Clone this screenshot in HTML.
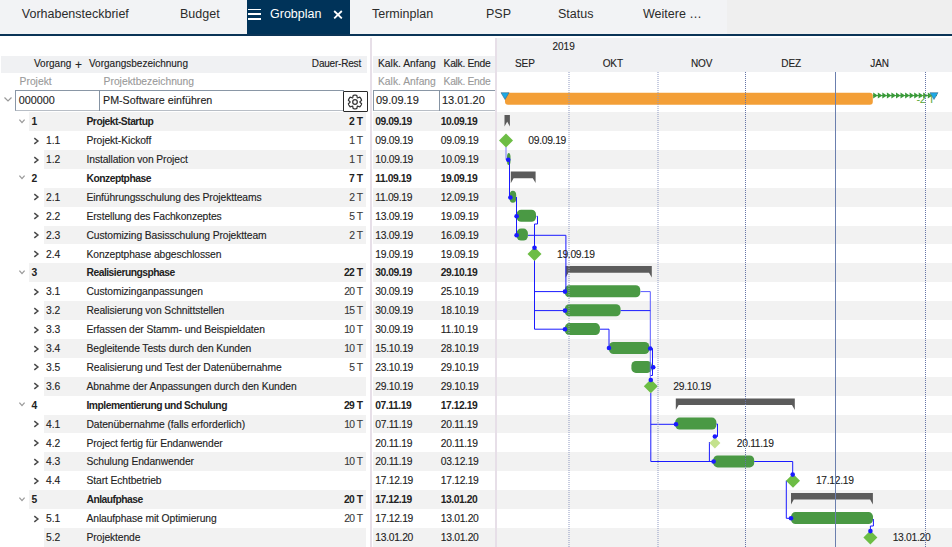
<!DOCTYPE html>
<html><head><meta charset="utf-8">
<style>
*{box-sizing:border-box;margin:0;padding:0}
html,body{width:952px;height:547px;overflow:hidden;background:#fff;font-family:"Liberation Sans",sans-serif;color:#222}
.a{position:absolute}
.tab{position:absolute;top:0;height:34px;line-height:29px;font-size:12.5px;color:#2b2b2b;white-space:nowrap}
.t{position:absolute;font-size:10.3px;white-space:nowrap;line-height:12px;-webkit-text-stroke:0.12px currentColor}
.b{font-weight:700;letter-spacing:-0.5px;-webkit-text-stroke:0}
.g{color:#9a9a9a}
.rbg{position:absolute;background:#f2f2f2}
</style></head><body>

<div class="a" style="left:0;top:0;width:727px;height:34px;background:#f2f3f5"></div>
<div class="a" style="left:727px;top:0;width:225px;height:34px;background:#efefef"></div>
<div class="a" style="left:0;top:34px;width:952px;height:2px;background:#0a3457"></div>
<div class="a" style="left:247px;top:0;width:103px;height:34px;background:#003359"></div>
<div class="tab" style="left:21.8px">Vorhabensteckbrief</div>
<div class="tab" style="left:180px">Budget</div>
<div class="tab" style="left:372px">Terminplan</div>
<div class="tab" style="left:486px">PSP</div>
<div class="tab" style="left:558px">Status</div>
<div class="tab" style="left:643px">Weitere …</div>
<div class="tab" style="left:270px;color:#fff">Grobplan</div>
<div class="a" style="left:248px;top:8.7px;width:13.2px;height:1.7px;background:#fff"></div>
<div class="a" style="left:248px;top:13.3px;width:13.2px;height:1.7px;background:#fff"></div>
<div class="a" style="left:248px;top:18.3px;width:13.2px;height:1.7px;background:#fff"></div>
<svg class="a" style="left:333px;top:10px" width="10" height="9" viewBox="0 0 10 9"><path d="M1.2 1L8.8 8.4M8.8 1L1.2 8.4" stroke="#fff" stroke-width="1.8"/></svg>
<div class="a" style="left:370px;top:38px;width:1.5px;height:509px;background:#e7dfe8"></div>
<div class="a" style="left:495px;top:38px;width:1.5px;height:509px;background:#e7dfe8"></div>
<div class="a" style="left:1px;top:56px;width:366px;height:17px;background:#f0f1f3"></div>
<div class="a" style="left:373px;top:56px;width:122px;height:17px;background:#f0f1f3"></div>
<div class="a" style="left:497px;top:38px;width:455px;height:34px;background:#f0f1f3"></div>
<div class="t" style="left:34px;top:57.7px;font-size:10px">Vorgang</div>
<div class="t" style="left:75px;top:59px;font-size:12px">+</div>
<div class="t" style="left:89px;top:57.7px;font-size:10px">Vorgangsbezeichnung</div>
<div class="t" style="left:300px;top:57.7px;width:61px;text-align:right;font-size:10px;letter-spacing:-0.2px">Dauer-Rest</div>
<div class="t" style="left:378px;top:57.7px">Kalk. Anfang</div>
<div class="t" style="left:443.6px;top:57.7px;letter-spacing:-0.3px">Kalk. Ende</div>
<div class="t g" style="left:19.6px;top:75.6px">Projekt</div>
<div class="t g" style="left:103.6px;top:75.6px">Projektbezeichnung</div>
<div class="t g" style="left:378px;top:75.6px">Kalk. Anfang</div>
<div class="t g" style="left:443.6px;top:75.6px;letter-spacing:-0.3px">Kalk. Ende</div>
<div class="t" style="left:552.5px;top:41px;font-size:10px">2019</div>
<div class="t" style="left:515px;top:57.8px;font-size:10px;letter-spacing:-0.1px">SEP</div>
<div class="t" style="left:602.7px;top:57.8px;font-size:10px;letter-spacing:-0.1px">OKT</div>
<div class="t" style="left:691px;top:57.8px;font-size:10px;letter-spacing:-0.1px">NOV</div>
<div class="t" style="left:781.3px;top:57.8px;font-size:10px;letter-spacing:-0.1px">DEZ</div>
<div class="t" style="left:870.3px;top:57.8px;font-size:10px;letter-spacing:-0.1px">JAN</div>
<div class="a" style="left:15px;top:90px;width:329px;height:21px;border:1px solid #8a97a6;border-bottom:1.5px solid #b8bec6;background:#fff"></div>
<div class="a" style="left:99px;top:90px;width:1px;height:21px;background:#8593a3"></div>
<div class="a" style="left:343px;top:91px;width:25px;height:21px;border:1.3px solid #2a2a2a;border-radius:1px;background:#fff"></div>
<svg class="a" style="left:343px;top:89.5px" width="24" height="24" viewBox="0 0 24 24"><path fill="none" stroke="#333" stroke-width="1.25" stroke-linejoin="round" d="M16.90 12.00 L17.00 12.26 L17.30 12.56 L17.72 12.91 L18.20 13.32 L18.57 13.76 L18.47 14.10 L18.35 14.44 L18.21 14.77 L18.06 15.09 L17.89 15.40 L17.70 15.70 L17.50 16.00 L17.28 16.28 L17.05 16.55 L16.81 16.81 L16.24 16.71 L15.65 16.50 L15.13 16.31 L14.73 16.20 L14.45 16.24 L14.27 16.46 L14.17 16.87 L14.08 17.41 L13.96 18.03 L13.76 18.57 L13.41 18.65 L13.06 18.72 L12.71 18.76 L12.36 18.79 L12.00 18.80 L11.64 18.79 L11.29 18.76 L10.94 18.72 L10.59 18.65 L10.24 18.57 L10.04 18.03 L9.92 17.41 L9.83 16.87 L9.73 16.46 L9.55 16.24 L9.27 16.20 L8.87 16.31 L8.35 16.50 L7.76 16.71 L7.19 16.81 L6.95 16.55 L6.72 16.28 L6.50 16.00 L6.30 15.70 L6.11 15.40 L5.94 15.09 L5.79 14.77 L5.65 14.44 L5.53 14.10 L5.43 13.76 L5.80 13.32 L6.28 12.91 L6.70 12.56 L7.00 12.26 L7.10 12.00 L7.00 11.74 L6.70 11.44 L6.28 11.09 L5.80 10.68 L5.43 10.24 L5.53 9.90 L5.65 9.56 L5.79 9.23 L5.94 8.91 L6.11 8.60 L6.30 8.30 L6.50 8.00 L6.72 7.72 L6.95 7.45 L7.19 7.19 L7.76 7.29 L8.35 7.50 L8.87 7.69 L9.27 7.80 L9.55 7.76 L9.73 7.54 L9.83 7.13 L9.92 6.59 L10.04 5.97 L10.24 5.43 L10.59 5.35 L10.94 5.28 L11.29 5.24 L11.64 5.21 L12.00 5.20 L12.36 5.21 L12.71 5.24 L13.06 5.28 L13.41 5.35 L13.76 5.43 L13.96 5.97 L14.08 6.59 L14.17 7.13 L14.27 7.54 L14.45 7.76 L14.73 7.80 L15.13 7.69 L15.65 7.50 L16.24 7.29 L16.81 7.19 L17.05 7.45 L17.28 7.72 L17.50 8.00 L17.70 8.30 L17.89 8.60 L18.06 8.91 L18.21 9.23 L18.35 9.56 L18.47 9.90 L18.57 10.24 L18.20 10.68 L17.72 11.09 L17.30 11.44 L17.00 11.74 L16.90 12.00Z"/><circle cx="12" cy="12" r="2.3" fill="none" stroke="#333" stroke-width="1.25"/></svg>
<div class="a" style="left:373px;top:90px;width:122px;height:21px;border:1px solid #8a97a6;border-right:none;border-bottom:1.5px solid #b8bec6;background:#fff"></div>
<div class="a" style="left:439px;top:90px;width:1px;height:21px;background:#8593a3"></div>
<div class="t" style="left:18.7px;top:94px;font-size:10.8px">000000</div>
<div class="t" style="left:103px;top:94px;font-size:10.7px">PM-Software einführen</div>
<div class="t" style="left:376px;top:94px;font-size:11px">09.09.19</div>
<div class="t" style="left:442px;top:94px;font-size:11px">13.01.20</div>
<svg class="a" style="left:4px;top:96px" width="8" height="7" viewBox="0 0 8 7"><path d="M0.5 1.5L4 5L7.5 1.5" fill="none" stroke="#999" stroke-width="1.2"/></svg>
<div class="rbg" style="left:29.2px;top:112.20px;width:336.8px;height:18.9px"></div>
<div class="rbg" style="left:373px;top:112.20px;width:122px;height:18.9px"></div>
<div class="rbg" style="left:497px;top:112.20px;width:455px;height:18.9px"></div>
<svg class="a" style="left:18px;top:117.70px" width="8" height="7" viewBox="0 0 8 7"><path d="M1.4 1.6L4 4.6L6.6 1.6" fill="none" stroke="#9a9a9a" stroke-width="1.3"/></svg>
<div class="t b" style="left:31.5px;top:116.20px">1</div>
<div class="t b" style="left:86.5px;top:116.20px">Projekt-Startup</div>
<div class="t b" style="left:313px;top:116.20px;width:50px;text-align:right">2 <span style='letter-spacing:0'>T</span></div>
<div class="t b" style="left:375.3px;top:116.20px;letter-spacing:-0.45px">09.09.19</div>
<div class="t b" style="left:440.8px;top:116.20px;letter-spacing:-0.45px">10.09.19</div>
<svg class="a" style="left:32.5px;top:136.60px" width="7" height="8" viewBox="0 0 7 8"><path d="M1.3 1.1L4.9 4L1.3 6.9" fill="none" stroke="#4a4a4a" stroke-width="1.5"/></svg>
<div class="t" style="left:46px;top:135.10px">1.1</div>
<div class="t" style="left:86.5px;top:135.10px;letter-spacing:-0.1px">Projekt-Kickoff</div>
<div class="t" style="left:313px;top:135.10px;width:50px;text-align:right;color:#3a3a3a;letter-spacing:-0.6px">1 <span style='letter-spacing:0'>T</span></div>
<div class="t" style="left:375.3px;top:135.10px;letter-spacing:-0.3px">09.09.19</div>
<div class="t" style="left:440.8px;top:135.10px;letter-spacing:-0.3px">09.09.19</div>
<div class="rbg" style="left:44px;top:150.00px;width:322px;height:18.9px"></div>
<div class="rbg" style="left:373px;top:150.00px;width:122px;height:18.9px"></div>
<div class="rbg" style="left:497px;top:150.00px;width:455px;height:18.9px"></div>
<svg class="a" style="left:32.5px;top:155.50px" width="7" height="8" viewBox="0 0 7 8"><path d="M1.3 1.1L4.9 4L1.3 6.9" fill="none" stroke="#4a4a4a" stroke-width="1.5"/></svg>
<div class="t" style="left:46px;top:154.00px">1.2</div>
<div class="t" style="left:86.5px;top:154.00px;letter-spacing:-0.1px">Installation von Project</div>
<div class="t" style="left:313px;top:154.00px;width:50px;text-align:right;color:#3a3a3a;letter-spacing:-0.6px">1 <span style='letter-spacing:0'>T</span></div>
<div class="t" style="left:375.3px;top:154.00px;letter-spacing:-0.3px">10.09.19</div>
<div class="t" style="left:440.8px;top:154.00px;letter-spacing:-0.3px">10.09.19</div>
<svg class="a" style="left:18px;top:174.40px" width="8" height="7" viewBox="0 0 8 7"><path d="M1.4 1.6L4 4.6L6.6 1.6" fill="none" stroke="#9a9a9a" stroke-width="1.3"/></svg>
<div class="t b" style="left:31.5px;top:172.90px">2</div>
<div class="t b" style="left:86.5px;top:172.90px">Konzeptphase</div>
<div class="t b" style="left:313px;top:172.90px;width:50px;text-align:right">7 <span style='letter-spacing:0'>T</span></div>
<div class="t b" style="left:375.3px;top:172.90px;letter-spacing:-0.45px">11.09.19</div>
<div class="t b" style="left:440.8px;top:172.90px;letter-spacing:-0.45px">19.09.19</div>
<div class="rbg" style="left:44px;top:187.80px;width:322px;height:18.9px"></div>
<div class="rbg" style="left:373px;top:187.80px;width:122px;height:18.9px"></div>
<div class="rbg" style="left:497px;top:187.80px;width:455px;height:18.9px"></div>
<svg class="a" style="left:32.5px;top:193.30px" width="7" height="8" viewBox="0 0 7 8"><path d="M1.3 1.1L4.9 4L1.3 6.9" fill="none" stroke="#4a4a4a" stroke-width="1.5"/></svg>
<div class="t" style="left:46px;top:191.80px">2.1</div>
<div class="t" style="left:86.5px;top:191.80px;letter-spacing:-0.1px">Einführungsschulung des Projektteams</div>
<div class="t" style="left:313px;top:191.80px;width:50px;text-align:right;color:#3a3a3a;letter-spacing:-0.6px">2 <span style='letter-spacing:0'>T</span></div>
<div class="t" style="left:375.3px;top:191.80px;letter-spacing:-0.3px">11.09.19</div>
<div class="t" style="left:440.8px;top:191.80px;letter-spacing:-0.3px">12.09.19</div>
<svg class="a" style="left:32.5px;top:212.20px" width="7" height="8" viewBox="0 0 7 8"><path d="M1.3 1.1L4.9 4L1.3 6.9" fill="none" stroke="#4a4a4a" stroke-width="1.5"/></svg>
<div class="t" style="left:46px;top:210.70px">2.2</div>
<div class="t" style="left:86.5px;top:210.70px;letter-spacing:-0.1px">Erstellung des Fachkonzeptes</div>
<div class="t" style="left:313px;top:210.70px;width:50px;text-align:right;color:#3a3a3a;letter-spacing:-0.6px">5 <span style='letter-spacing:0'>T</span></div>
<div class="t" style="left:375.3px;top:210.70px;letter-spacing:-0.3px">13.09.19</div>
<div class="t" style="left:440.8px;top:210.70px;letter-spacing:-0.3px">19.09.19</div>
<div class="rbg" style="left:44px;top:225.60px;width:322px;height:18.9px"></div>
<div class="rbg" style="left:373px;top:225.60px;width:122px;height:18.9px"></div>
<div class="rbg" style="left:497px;top:225.60px;width:455px;height:18.9px"></div>
<svg class="a" style="left:32.5px;top:231.10px" width="7" height="8" viewBox="0 0 7 8"><path d="M1.3 1.1L4.9 4L1.3 6.9" fill="none" stroke="#4a4a4a" stroke-width="1.5"/></svg>
<div class="t" style="left:46px;top:229.60px">2.3</div>
<div class="t" style="left:86.5px;top:229.60px;letter-spacing:-0.1px">Customizing Basisschulung Projektteam</div>
<div class="t" style="left:313px;top:229.60px;width:50px;text-align:right;color:#3a3a3a;letter-spacing:-0.6px">2 <span style='letter-spacing:0'>T</span></div>
<div class="t" style="left:375.3px;top:229.60px;letter-spacing:-0.3px">13.09.19</div>
<div class="t" style="left:440.8px;top:229.60px;letter-spacing:-0.3px">16.09.19</div>
<svg class="a" style="left:32.5px;top:250.00px" width="7" height="8" viewBox="0 0 7 8"><path d="M1.3 1.1L4.9 4L1.3 6.9" fill="none" stroke="#4a4a4a" stroke-width="1.5"/></svg>
<div class="t" style="left:46px;top:248.50px">2.4</div>
<div class="t" style="left:86.5px;top:248.50px;letter-spacing:-0.1px">Konzeptphase abgeschlossen</div>
<div class="t" style="left:375.3px;top:248.50px;letter-spacing:-0.3px">19.09.19</div>
<div class="t" style="left:440.8px;top:248.50px;letter-spacing:-0.3px">19.09.19</div>
<div class="rbg" style="left:29.2px;top:263.40px;width:336.8px;height:18.9px"></div>
<div class="rbg" style="left:373px;top:263.40px;width:122px;height:18.9px"></div>
<div class="rbg" style="left:497px;top:263.40px;width:455px;height:18.9px"></div>
<svg class="a" style="left:18px;top:268.90px" width="8" height="7" viewBox="0 0 8 7"><path d="M1.4 1.6L4 4.6L6.6 1.6" fill="none" stroke="#9a9a9a" stroke-width="1.3"/></svg>
<div class="t b" style="left:31.5px;top:267.40px">3</div>
<div class="t b" style="left:86.5px;top:267.40px">Realisierungsphase</div>
<div class="t b" style="left:313px;top:267.40px;width:50px;text-align:right">22 <span style='letter-spacing:0'>T</span></div>
<div class="t b" style="left:375.3px;top:267.40px;letter-spacing:-0.45px">30.09.19</div>
<div class="t b" style="left:440.8px;top:267.40px;letter-spacing:-0.45px">29.10.19</div>
<svg class="a" style="left:32.5px;top:287.80px" width="7" height="8" viewBox="0 0 7 8"><path d="M1.3 1.1L4.9 4L1.3 6.9" fill="none" stroke="#4a4a4a" stroke-width="1.5"/></svg>
<div class="t" style="left:46px;top:286.30px">3.1</div>
<div class="t" style="left:86.5px;top:286.30px;letter-spacing:-0.1px">Customizinganpassungen</div>
<div class="t" style="left:313px;top:286.30px;width:50px;text-align:right;color:#3a3a3a;letter-spacing:-0.6px">20 <span style='letter-spacing:0'>T</span></div>
<div class="t" style="left:375.3px;top:286.30px;letter-spacing:-0.3px">30.09.19</div>
<div class="t" style="left:440.8px;top:286.30px;letter-spacing:-0.3px">25.10.19</div>
<div class="rbg" style="left:44px;top:301.20px;width:322px;height:18.9px"></div>
<div class="rbg" style="left:373px;top:301.20px;width:122px;height:18.9px"></div>
<div class="rbg" style="left:497px;top:301.20px;width:455px;height:18.9px"></div>
<svg class="a" style="left:32.5px;top:306.70px" width="7" height="8" viewBox="0 0 7 8"><path d="M1.3 1.1L4.9 4L1.3 6.9" fill="none" stroke="#4a4a4a" stroke-width="1.5"/></svg>
<div class="t" style="left:46px;top:305.20px">3.2</div>
<div class="t" style="left:86.5px;top:305.20px;letter-spacing:-0.1px">Realisierung von Schnittstellen</div>
<div class="t" style="left:313px;top:305.20px;width:50px;text-align:right;color:#3a3a3a;letter-spacing:-0.6px">15 <span style='letter-spacing:0'>T</span></div>
<div class="t" style="left:375.3px;top:305.20px;letter-spacing:-0.3px">30.09.19</div>
<div class="t" style="left:440.8px;top:305.20px;letter-spacing:-0.3px">18.10.19</div>
<svg class="a" style="left:32.5px;top:325.60px" width="7" height="8" viewBox="0 0 7 8"><path d="M1.3 1.1L4.9 4L1.3 6.9" fill="none" stroke="#4a4a4a" stroke-width="1.5"/></svg>
<div class="t" style="left:46px;top:324.10px">3.3</div>
<div class="t" style="left:86.5px;top:324.10px;letter-spacing:-0.1px">Erfassen der Stamm- und Beispieldaten</div>
<div class="t" style="left:313px;top:324.10px;width:50px;text-align:right;color:#3a3a3a;letter-spacing:-0.6px">10 <span style='letter-spacing:0'>T</span></div>
<div class="t" style="left:375.3px;top:324.10px;letter-spacing:-0.3px">30.09.19</div>
<div class="t" style="left:440.8px;top:324.10px;letter-spacing:-0.3px">11.10.19</div>
<div class="rbg" style="left:44px;top:339.00px;width:322px;height:18.9px"></div>
<div class="rbg" style="left:373px;top:339.00px;width:122px;height:18.9px"></div>
<div class="rbg" style="left:497px;top:339.00px;width:455px;height:18.9px"></div>
<svg class="a" style="left:32.5px;top:344.50px" width="7" height="8" viewBox="0 0 7 8"><path d="M1.3 1.1L4.9 4L1.3 6.9" fill="none" stroke="#4a4a4a" stroke-width="1.5"/></svg>
<div class="t" style="left:46px;top:343.00px">3.4</div>
<div class="t" style="left:86.5px;top:343.00px;letter-spacing:-0.1px">Begleitende Tests durch den Kunden</div>
<div class="t" style="left:313px;top:343.00px;width:50px;text-align:right;color:#3a3a3a;letter-spacing:-0.6px">10 <span style='letter-spacing:0'>T</span></div>
<div class="t" style="left:375.3px;top:343.00px;letter-spacing:-0.3px">15.10.19</div>
<div class="t" style="left:440.8px;top:343.00px;letter-spacing:-0.3px">28.10.19</div>
<svg class="a" style="left:32.5px;top:363.40px" width="7" height="8" viewBox="0 0 7 8"><path d="M1.3 1.1L4.9 4L1.3 6.9" fill="none" stroke="#4a4a4a" stroke-width="1.5"/></svg>
<div class="t" style="left:46px;top:361.90px">3.5</div>
<div class="t" style="left:86.5px;top:361.90px;letter-spacing:-0.1px">Realisierung und Test der Datenübernahme</div>
<div class="t" style="left:313px;top:361.90px;width:50px;text-align:right;color:#3a3a3a;letter-spacing:-0.6px">5 <span style='letter-spacing:0'>T</span></div>
<div class="t" style="left:375.3px;top:361.90px;letter-spacing:-0.3px">23.10.19</div>
<div class="t" style="left:440.8px;top:361.90px;letter-spacing:-0.3px">29.10.19</div>
<div class="rbg" style="left:44px;top:376.80px;width:322px;height:18.9px"></div>
<div class="rbg" style="left:373px;top:376.80px;width:122px;height:18.9px"></div>
<div class="rbg" style="left:497px;top:376.80px;width:455px;height:18.9px"></div>
<svg class="a" style="left:32.5px;top:382.30px" width="7" height="8" viewBox="0 0 7 8"><path d="M1.3 1.1L4.9 4L1.3 6.9" fill="none" stroke="#4a4a4a" stroke-width="1.5"/></svg>
<div class="t" style="left:46px;top:380.80px">3.6</div>
<div class="t" style="left:86.5px;top:380.80px;letter-spacing:-0.1px">Abnahme der Anpassungen durch den Kunden</div>
<div class="t" style="left:375.3px;top:380.80px;letter-spacing:-0.3px">29.10.19</div>
<div class="t" style="left:440.8px;top:380.80px;letter-spacing:-0.3px">29.10.19</div>
<svg class="a" style="left:18px;top:401.20px" width="8" height="7" viewBox="0 0 8 7"><path d="M1.4 1.6L4 4.6L6.6 1.6" fill="none" stroke="#9a9a9a" stroke-width="1.3"/></svg>
<div class="t b" style="left:31.5px;top:399.70px">4</div>
<div class="t b" style="left:86.5px;top:399.70px">Implementierung und Schulung</div>
<div class="t b" style="left:313px;top:399.70px;width:50px;text-align:right">29 <span style='letter-spacing:0'>T</span></div>
<div class="t b" style="left:375.3px;top:399.70px;letter-spacing:-0.45px">07.11.19</div>
<div class="t b" style="left:440.8px;top:399.70px;letter-spacing:-0.45px">17.12.19</div>
<div class="rbg" style="left:44px;top:414.60px;width:322px;height:18.9px"></div>
<div class="rbg" style="left:373px;top:414.60px;width:122px;height:18.9px"></div>
<div class="rbg" style="left:497px;top:414.60px;width:455px;height:18.9px"></div>
<svg class="a" style="left:32.5px;top:420.10px" width="7" height="8" viewBox="0 0 7 8"><path d="M1.3 1.1L4.9 4L1.3 6.9" fill="none" stroke="#4a4a4a" stroke-width="1.5"/></svg>
<div class="t" style="left:46px;top:418.60px">4.1</div>
<div class="t" style="left:86.5px;top:418.60px;letter-spacing:-0.1px">Datenübernahme (falls erforderlich)</div>
<div class="t" style="left:313px;top:418.60px;width:50px;text-align:right;color:#3a3a3a;letter-spacing:-0.6px">10 <span style='letter-spacing:0'>T</span></div>
<div class="t" style="left:375.3px;top:418.60px;letter-spacing:-0.3px">07.11.19</div>
<div class="t" style="left:440.8px;top:418.60px;letter-spacing:-0.3px">20.11.19</div>
<svg class="a" style="left:32.5px;top:439.00px" width="7" height="8" viewBox="0 0 7 8"><path d="M1.3 1.1L4.9 4L1.3 6.9" fill="none" stroke="#4a4a4a" stroke-width="1.5"/></svg>
<div class="t" style="left:46px;top:437.50px">4.2</div>
<div class="t" style="left:86.5px;top:437.50px;letter-spacing:-0.1px">Project fertig für Endanwender</div>
<div class="t" style="left:375.3px;top:437.50px;letter-spacing:-0.3px">20.11.19</div>
<div class="t" style="left:440.8px;top:437.50px;letter-spacing:-0.3px">20.11.19</div>
<div class="rbg" style="left:44px;top:452.40px;width:322px;height:18.9px"></div>
<div class="rbg" style="left:373px;top:452.40px;width:122px;height:18.9px"></div>
<div class="rbg" style="left:497px;top:452.40px;width:455px;height:18.9px"></div>
<svg class="a" style="left:32.5px;top:457.90px" width="7" height="8" viewBox="0 0 7 8"><path d="M1.3 1.1L4.9 4L1.3 6.9" fill="none" stroke="#4a4a4a" stroke-width="1.5"/></svg>
<div class="t" style="left:46px;top:456.40px">4.3</div>
<div class="t" style="left:86.5px;top:456.40px;letter-spacing:-0.1px">Schulung Endanwender</div>
<div class="t" style="left:313px;top:456.40px;width:50px;text-align:right;color:#3a3a3a;letter-spacing:-0.6px">10 <span style='letter-spacing:0'>T</span></div>
<div class="t" style="left:375.3px;top:456.40px;letter-spacing:-0.3px">20.11.19</div>
<div class="t" style="left:440.8px;top:456.40px;letter-spacing:-0.3px">03.12.19</div>
<svg class="a" style="left:32.5px;top:476.80px" width="7" height="8" viewBox="0 0 7 8"><path d="M1.3 1.1L4.9 4L1.3 6.9" fill="none" stroke="#4a4a4a" stroke-width="1.5"/></svg>
<div class="t" style="left:46px;top:475.30px">4.4</div>
<div class="t" style="left:86.5px;top:475.30px;letter-spacing:-0.1px">Start Echtbetrieb</div>
<div class="t" style="left:375.3px;top:475.30px;letter-spacing:-0.3px">17.12.19</div>
<div class="t" style="left:440.8px;top:475.30px;letter-spacing:-0.3px">17.12.19</div>
<div class="rbg" style="left:29.2px;top:490.20px;width:336.8px;height:18.9px"></div>
<div class="rbg" style="left:373px;top:490.20px;width:122px;height:18.9px"></div>
<div class="rbg" style="left:497px;top:490.20px;width:455px;height:18.9px"></div>
<svg class="a" style="left:18px;top:495.70px" width="8" height="7" viewBox="0 0 8 7"><path d="M1.4 1.6L4 4.6L6.6 1.6" fill="none" stroke="#9a9a9a" stroke-width="1.3"/></svg>
<div class="t b" style="left:31.5px;top:494.20px">5</div>
<div class="t b" style="left:86.5px;top:494.20px">Anlaufphase</div>
<div class="t b" style="left:313px;top:494.20px;width:50px;text-align:right">20 <span style='letter-spacing:0'>T</span></div>
<div class="t b" style="left:375.3px;top:494.20px;letter-spacing:-0.45px">17.12.19</div>
<div class="t b" style="left:440.8px;top:494.20px;letter-spacing:-0.45px">13.01.20</div>
<svg class="a" style="left:32.5px;top:514.60px" width="7" height="8" viewBox="0 0 7 8"><path d="M1.3 1.1L4.9 4L1.3 6.9" fill="none" stroke="#4a4a4a" stroke-width="1.5"/></svg>
<div class="t" style="left:46px;top:513.10px">5.1</div>
<div class="t" style="left:86.5px;top:513.10px;letter-spacing:-0.1px">Anlaufphase mit Optimierung</div>
<div class="t" style="left:313px;top:513.10px;width:50px;text-align:right;color:#3a3a3a;letter-spacing:-0.6px">20 <span style='letter-spacing:0'>T</span></div>
<div class="t" style="left:375.3px;top:513.10px;letter-spacing:-0.3px">17.12.19</div>
<div class="t" style="left:440.8px;top:513.10px;letter-spacing:-0.3px">13.01.20</div>
<div class="rbg" style="left:44px;top:528.00px;width:322px;height:18.9px"></div>
<div class="rbg" style="left:373px;top:528.00px;width:122px;height:18.9px"></div>
<div class="rbg" style="left:497px;top:528.00px;width:455px;height:18.9px"></div>
<div class="t" style="left:46px;top:532.00px">5.2</div>
<div class="t" style="left:86.5px;top:532.00px;letter-spacing:-0.1px">Projektende</div>
<div class="t" style="left:375.3px;top:532.00px;letter-spacing:-0.3px">13.01.20</div>
<div class="t" style="left:440.8px;top:532.00px;letter-spacing:-0.3px">13.01.20</div>
<svg class="a" style="left:0;top:0" width="952" height="547" viewBox="0 0 952 547"><rect x="505" y="92.7" width="367.8" height="12" rx="3" fill="#f39f37"/><path d="M873.2 92.6 L877.8 95.6 L873.2 98.6 Z" fill="#3a9a3a"/><path d="M877.8 92.6 L882.4 95.6 L877.8 98.6 Z" fill="#3a9a3a"/><path d="M882.3 92.6 L886.9 95.6 L882.3 98.6 Z" fill="#3a9a3a"/><path d="M886.9 92.6 L891.5 95.6 L886.9 98.6 Z" fill="#3a9a3a"/><path d="M891.4 92.6 L896.0 95.6 L891.4 98.6 Z" fill="#3a9a3a"/><path d="M896.0 92.6 L900.6 95.6 L896.0 98.6 Z" fill="#3a9a3a"/><path d="M900.5 92.6 L905.1 95.6 L900.5 98.6 Z" fill="#3a9a3a"/><path d="M905.1 92.6 L909.7 95.6 L905.1 98.6 Z" fill="#3a9a3a"/><path d="M909.6 92.6 L914.2 95.6 L909.6 98.6 Z" fill="#3a9a3a"/><path d="M914.2 92.6 L918.8 95.6 L914.2 98.6 Z" fill="#3a9a3a"/><path d="M918.7 92.6 L923.3 95.6 L918.7 98.6 Z" fill="#3a9a3a"/><path d="M923.2 92.6 L927.9 95.6 L923.2 98.6 Z" fill="#3a9a3a"/><path d="M927.8 92.6 L932.4 95.6 L927.8 98.6 Z" fill="#3a9a3a"/><line x1="873" y1="95.6" x2="937" y2="95.6" stroke="#3a9a3a" stroke-width="1"/><text x="916.5" y="102.8" font-size="11" fill="#5aa838" font-family="Liberation Sans" letter-spacing="-0.3">-2 T</text><path d="M501 92.7 L509 92.7 L505 99.5 Z" fill="#1ca9e6" stroke="#3a6a8a" stroke-width="0.6"/><path d="M930 92.7 L938 92.7 L934 99.5 Z" fill="#1ca9e6" stroke="#3a6a8a" stroke-width="0.6"/><path d="M504.5 114.9 H509.9 V126.4 L507.1 121.5 H507.3 L504.5 126.5 Z" fill="#5b5b5b"/><path d="M510.8 171.6 H535.6 V183.1 L532.8 178.2 H513.6 L510.8 183.2 Z" fill="#5b5b5b"/><path d="M565.6 266.1 H651.8 V277.6 L649.0 272.7 H568.4 L565.6 277.7 Z" fill="#5b5b5b"/><path d="M675.8 398.4 H794.8 V409.9 L792.0 405.0 H678.6 L675.8 410.0 Z" fill="#5b5b5b"/><path d="M791.0 492.9 H872.9 V504.4 L870.1 499.5 H793.8 L791.0 504.5 Z" fill="#5b5b5b"/><rect x="507.0" y="153.0" width="3.5" height="12" rx="4.5" fill="#4a9944"/><rect x="509.6" y="190.8" width="6.6" height="12" rx="4.5" fill="#4a9944"/><rect x="516.6" y="209.7" width="19.4" height="12" rx="4.5" fill="#4a9944"/><rect x="516.6" y="228.6" width="11.3" height="12" rx="4.5" fill="#4a9944"/><rect x="564.8" y="285.3" width="75.5" height="12" rx="4.5" fill="#4a9944"/><rect x="564.8" y="304.2" width="55.8" height="12" rx="4.5" fill="#4a9944"/><rect x="564.8" y="323.1" width="35.1" height="12" rx="4.5" fill="#4a9944"/><rect x="609.0" y="342.0" width="40.3" height="12" rx="4.5" fill="#4a9944"/><rect x="631.4" y="360.9" width="20.4" height="12" rx="4.5" fill="#4a9944"/><rect x="675.2" y="417.6" width="41.2" height="12" rx="4.5" fill="#4a9944"/><rect x="713.2" y="455.4" width="41.0" height="12" rx="4.5" fill="#4a9944"/><rect x="791.0" y="512.1" width="82.0" height="12" rx="4.5" fill="#4a9944"/><path d="M506.0 147.0 L506.0 159.7 L508.2 159.7" fill="none" stroke="#7a7aff" stroke-width="1.0"/><path d="M509.5 160.0 L509.5 197.5" fill="none" stroke="#1a1aff" stroke-width="1.0"/><path d="M516.5 197.0 L516.5 235.3" fill="none" stroke="#1a1aff" stroke-width="1.0"/><path d="M536.5 216.3 L537.5 216.3 L537.5 224.0 L534.5 224.0 L534.5 247.7" fill="none" stroke="#1a1aff" stroke-width="1.0"/><path d="M528.0 235.3 L565.9 235.3 L565.9 291.6" fill="none" stroke="#1a1aff" stroke-width="1.0"/><path d="M534.5 260.0 L534.5 329.2 L565.0 329.2" fill="none" stroke="#1a1aff" stroke-width="1.0"/><path d="M534.5 291.6 L565.0 291.6" fill="none" stroke="#1a1aff" stroke-width="1.0"/><path d="M534.5 310.6 L565.0 310.6" fill="none" stroke="#1a1aff" stroke-width="1.0"/><path d="M600.0 329.2 L609.0 329.2 L609.0 348.0" fill="none" stroke="#1a1aff" stroke-width="1.0"/><path d="M640.5 291.6 L650.3 291.6 L650.3 348.0" fill="none" stroke="#5a5aff" stroke-width="1.0"/><path d="M620.6 310.6 L650.3 310.6" fill="none" stroke="#1a1aff" stroke-width="1.0"/><path d="M649.8 348.5 L652.5 348.5 L652.5 375.5 L650.3 375.5" fill="none" stroke="#1a1aff" stroke-width="1.0"/><path d="M650.3 348.5 L650.3 380.0" fill="none" stroke="#6a6aff" stroke-width="1.0"/><path d="M650.8 393.0 L650.8 461.5 L713.0 461.5" fill="none" stroke="#1a1aff" stroke-width="1.0"/><path d="M650.8 424.3 L676.0 424.3" fill="none" stroke="#1a1aff" stroke-width="1.0"/><path d="M716.4 424.0 L717.5 424.0 L717.5 436.5 L714.9 436.5" fill="none" stroke="#1a1aff" stroke-width="1.0"/><path d="M709.4 442.0 L709.4 461.5" fill="none" stroke="#1a1aff" stroke-width="1.0"/><path d="M754.2 461.5 L792.7 461.5 L792.7 474.6" fill="none" stroke="#1a1aff" stroke-width="1.0"/><path d="M786.3 480.6 L786.3 518.3 L791.0 518.3" fill="none" stroke="#1a1aff" stroke-width="1.0"/><path d="M873.4 519.0 L873.4 526.0 L870.4 526.0 L870.4 531.1" fill="none" stroke="#1a1aff" stroke-width="1.0"/><path d="M499.0 140.6 L506.0 133.6 L513.0 140.6 L506.0 147.6 Z" fill="#6dbd45"/><path d="M527.5 254.0 L534.5 247.0 L541.5 254.0 L534.5 261.0 Z" fill="#6dbd45"/><path d="M643.8 386.3 L650.8 379.3 L657.8 386.3 L650.8 393.3 Z" fill="#6dbd45"/><path d="M709.4 443.0 L714.9 437.5 L720.4 443.0 L714.9 448.5 Z" fill="#c4e28c"/><path d="M786.0 480.8 L793.0 473.8 L800.0 480.8 L793.0 487.8 Z" fill="#6dbd45"/><path d="M863.4 537.5 L870.4 530.5 L877.4 537.5 L870.4 544.5 Z" fill="#6dbd45"/><circle cx="508.2" cy="159.7" r="2.3" fill="#1a1aff"/><circle cx="510.4" cy="197.5" r="2.3" fill="#1a1aff"/><circle cx="516.6" cy="216.3" r="2.3" fill="#1a1aff"/><circle cx="516.6" cy="235.3" r="2.3" fill="#1a1aff"/><circle cx="534.5" cy="247.7" r="2.3" fill="#1a1aff"/><circle cx="565.0" cy="291.6" r="2.3" fill="#1a1aff"/><circle cx="565.0" cy="310.6" r="2.3" fill="#1a1aff"/><circle cx="565.0" cy="329.2" r="2.3" fill="#1a1aff"/><circle cx="609.0" cy="348.0" r="2.3" fill="#1a1aff"/><circle cx="650.2" cy="348.5" r="2.3" fill="#1a1aff"/><circle cx="653.2" cy="367.3" r="2.3" fill="#1a1aff"/><circle cx="650.8" cy="380.0" r="2.3" fill="#1a1aff"/><circle cx="676.0" cy="424.3" r="2.3" fill="#1a1aff"/><circle cx="714.9" cy="436.5" r="2.3" fill="#1a1aff"/><circle cx="713.6" cy="461.5" r="2.3" fill="#1a1aff"/><circle cx="792.7" cy="474.6" r="2.3" fill="#1a1aff"/><circle cx="791.0" cy="518.3" r="2.3" fill="#1a1aff"/><circle cx="870.4" cy="531.1" r="2.3" fill="#1a1aff"/><text x="528.3" y="144.1" font-size="10.3" fill="#222" font-family="Liberation Sans" letter-spacing="-0.3" stroke="#222" stroke-width="0.1">09.09.19</text><text x="557" y="257.5" font-size="10.3" fill="#222" font-family="Liberation Sans" letter-spacing="-0.3" stroke="#222" stroke-width="0.1">19.09.19</text><text x="673.3" y="389.8" font-size="10.3" fill="#222" font-family="Liberation Sans" letter-spacing="-0.3" stroke="#222" stroke-width="0.1">29.10.19</text><text x="736.8" y="446.5" font-size="10.3" fill="#222" font-family="Liberation Sans" letter-spacing="-0.3" stroke="#222" stroke-width="0.1">20.11.19</text><text x="815.9" y="484.3" font-size="10.3" fill="#222" font-family="Liberation Sans" letter-spacing="-0.3" stroke="#222" stroke-width="0.1">17.12.19</text><text x="892.7" y="541.0" font-size="10.3" fill="#222" font-family="Liberation Sans" letter-spacing="-0.3" stroke="#222" stroke-width="0.1">13.01.20</text><line x1="569" y1="72" x2="569" y2="547" stroke="#8f9ac2" stroke-width="1" stroke-dasharray="1 1"/><line x1="658" y1="72" x2="658" y2="547" stroke="#8f9ac2" stroke-width="1" stroke-dasharray="1 1"/><line x1="745.5" y1="72" x2="745.5" y2="547" stroke="#6574a6" stroke-width="1" stroke-dasharray="1 1"/><line x1="925.5" y1="72" x2="925.5" y2="547" stroke="#6574a6" stroke-width="1" stroke-dasharray="1 1"/><line x1="835.5" y1="72" x2="835.5" y2="547" stroke="#6b7fae" stroke-width="1"/></svg>
</body></html>
